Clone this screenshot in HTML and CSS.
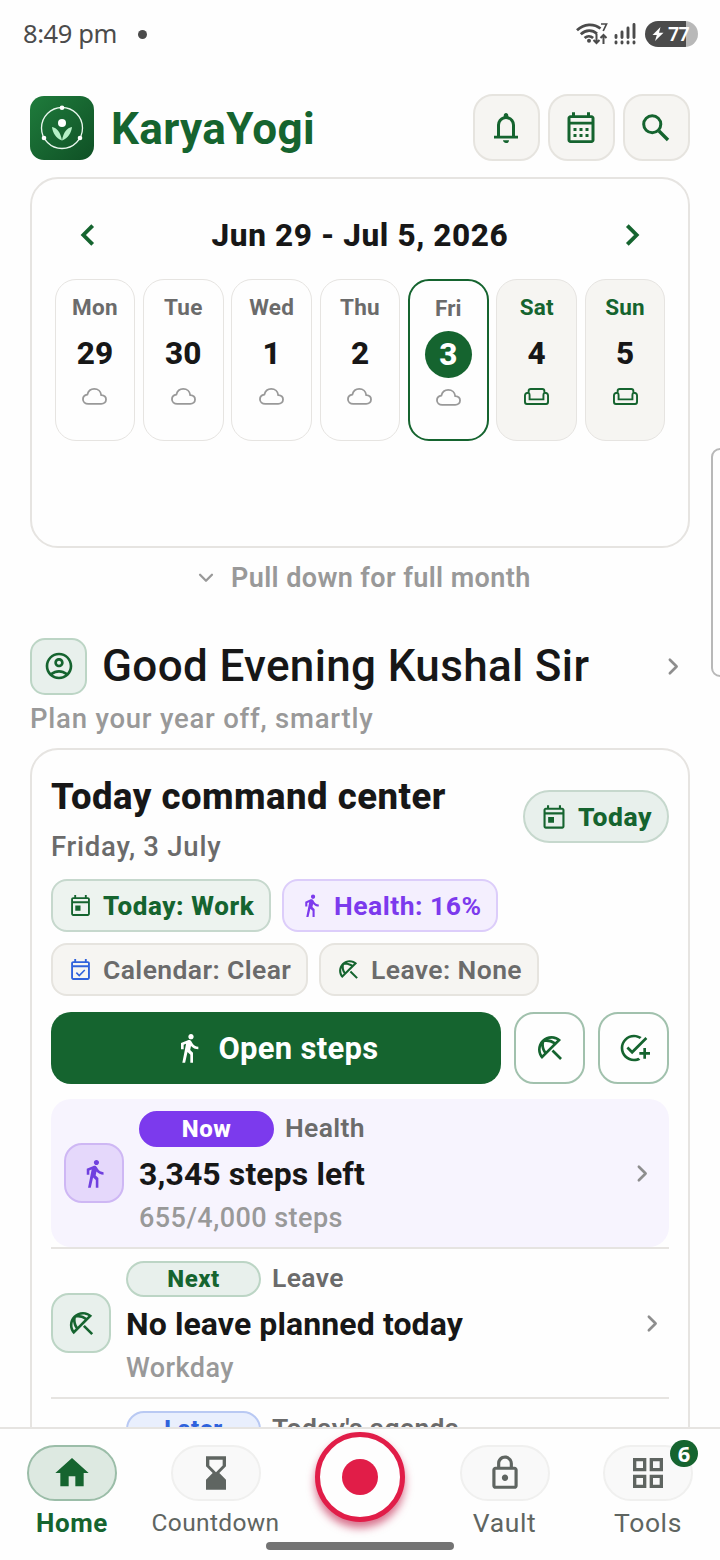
FILE: index.html
```html
<!DOCTYPE html>
<html lang="en">
<head>
<meta charset="utf-8">
<title>KaryaYogi</title>
<link rel="stylesheet" href="styles.css">
</head>
<body>
<svg class="defs" width="0" height="0" aria-hidden="true">
  <symbol id="today" viewBox="0 0 24 24"><path d="M19 4h-1V2h-1.800v2H7.800V2H6v2H5c-1.110 0-1.990.9-1.990 2L3 20c0 1.100.89 2 2 2h14c1.100 0 2-.9 2-2V6c0-1.100-.9-2-2-2zm.2 16.200H4.800V9.800h14.400v10.400zm0-12.200H4.800V5.800h14.400v2.200zM7 12h5v5H7z"/></symbol>
  <symbol id="event-ok" viewBox="0 0 24 24"><path d="M19 4h-1V2h-1.800v2H7.800V2H6v2H5c-1.110 0-1.990.9-1.990 2L3 20c0 1.100.89 2 2 2h14c1.100 0 2-.9 2-2V6c0-1.100-.9-2-2-2zm.2 16.200H4.800V9.800h14.400v10.400zm0-12.200H4.800V5.800h14.400v2.200z"/><path d="M8 15l2.800 2.800 5.300-5.300" fill="none" stroke="currentColor" stroke-width="1.500"/></symbol>
  <symbol id="walk" viewBox="0 0 24 24"><path d="M13.500 5.500c1.100 0 2-.9 2-2s-.9-2-2-2-2 .9-2 2 .9 2 2 2zM9.800 8.900L7 23h2.100l1.800-8 2.100 2v6h2v-7.500l-2.100-2 .6-3C14.800 12 16.800 13 19 13v-2c-1.900 0-3.500-1-4.300-2.400l-1-1.600c-.4-.6-1-1-1.700-1-.3 0-.5.1-.8.1L6 8.300V13h2V9.600l1.800-.7"/></symbol>
  <symbol id="beach" viewBox="0 0 24 24"><path d="M21 19.570l-1.427 1.428-6.442-6.442 1.430-1.428zM13.120 3c-2.580 0-5.160.98-7.140 2.950l-.01.01c-3.950 3.950-3.950 10.360 0 14.310l14.300-14.310C18.300 3.990 15.710 3 13.120 3zM6.140 17.270C5.400 16.030 5 14.610 5 13.120c0-.93.16-1.820.46-2.670.19 1.910.89 3.790 2.070 5.440l-1.390 1.380zm2.840-2.840C7.630 12.380 7.120 9.930 7.600 7.600c.58-.12 1.160-.18 1.750-.18 1.800 0 3.550.55 5.080 1.560l-5.450 5.450zm6.900-6.900c-1.650-1.180-3.530-1.880-5.430-2.060.85-.31 1.750-.47 2.680-.47 1.490 0 2.910.4 4.150 1.140l-1.400 1.390z"/></symbol>
  <symbol id="chev" viewBox="0 0 24 24"><path d="M8.500 5.500L15 12l-6.500 6.500" fill="none" stroke="currentColor" stroke-width="2.500" stroke-linejoin="round" stroke-linecap="round"/></symbol>
  <symbol id="chev-bold" viewBox="0 0 24 24"><path d="M8 4l8 8-8 8" fill="none" stroke="currentColor" stroke-width="3.300"/></symbol>
  <symbol id="cloud" viewBox="0 0 26 18"><path d="M6.500 16.500C3.300 16.500 1 14.300 1 11.600 1 9 3 7.100 5.600 6.800 6.500 3.300 9.300 1 12.700 1c4 0 6.900 2.700 7.300 6.500 2.900.1 5 1.900 5 4.500s-2.100 4.500-5 4.500z" fill="none" stroke="currentColor" stroke-width="1.900"/></symbol>
  <symbol id="sofa" viewBox="0 0 26 18"><path d="M4.800 5V3.200Q4.800 1 7 1h12q2.200 0 2.200 2.200V5M4.800 5q1 .6 1 2.200v4.600h14.400V7.200q0-1.600 1-2.200c2.100-.2 3.800.9 3.800 2.800v6.400q0 2.500-2.300 2.500H3.300Q1 16.700 1 14.200V7.800C1 5.900 2.700 4.800 4.800 5z" fill="none" stroke="currentColor" stroke-width="2"/></symbol>
</svg>
<div class="phone">
  <header class="status">
    <span class="clock">8:49 pm</span><span class="dot"></span>
    <svg class="wifi" viewBox="0 0 32 24"><g fill="none" stroke="currentColor" stroke-width="2.700"><path d="M1 8.200C8 1.300 18 1.300 24.500 6.500M4.800 12.300c5-4.800 11.500-4.800 16.200-.6M8.600 16c2.500-2.300 6-2.300 8.500 0"/><path d="M20.500 12v9m-3-3l3 3 3-3M27.500 22v-9m-3 3l3-3 3 3" stroke-width="2"/><path d="M25 2h5.500l-3.300 7" stroke-width="1.700"/></g><circle cx="13" cy="18.800" r="2"/></svg>
    <svg class="signal" viewBox="0 0 22 24"><g stroke="currentColor" stroke-width="2.900" stroke-linecap="round"><path d="M2 13.500v2M8 10v5.500M14 6v9.500M20 2.500v13M2 20v1M8 20v1M14 20v1M20 20v1"/></g></svg>
    <span class="battery"><svg viewBox="0 0 12 16"><path d="M8.500 1L.5 9h4.300L3 15l8.500-8.200H7z"/></svg>77</span>
  </header>

  <div class="topbar">
    <svg class="logo" viewBox="0 0 64 64"><defs><linearGradient id="lg" x1="0" y1="0" x2="1" y2="1"><stop offset="0" stop-color="#1f7c3c"/><stop offset="1" stop-color="#0f5025"/></linearGradient></defs><rect width="64" height="64" rx="14" fill="url(#lg)"/><circle cx="32" cy="32" r="20.500" fill="none" stroke="#e9f7ee" stroke-width="1.300"/><g fill="#fff"><circle cx="32" cy="11.700" r="2.300"/><circle cx="14" cy="42" r="2.300"/><circle cx="50" cy="42" r="2.300"/><circle cx="32" cy="27" r="4"/></g><path d="M32 44.500C30.500 36 27 32 22 31c.8 6 3.700 11 10 13.500zM32 44.500C33.500 36 37 32 42 31c-.8 6-3.700 11-10 13.500z" fill="#b5f0c6"/></svg>
    <h1 class="brand">KaryaYogi</h1>
    <div class="actions">
      <button class="tool"><svg viewBox="0 0 24 24"><path d="M4 19v-1.800h2V10q0-2.075 1.250-3.688T10.500 4.200v-.7q0-.625.438-1.062T12 2t1.063.438T13.500 3.500v.7q2 .5 3.250 2.113T18 10v7.200h2V19zm8 3q-.825 0-1.412-.587T10 20.200h4q0 .825-.587 1.413T12 22m-4-4.800h8V10q0-1.650-1.175-2.825T12 6 9.175 7.175 8 10z"/></svg></button>
      <button class="tool"><svg viewBox="0 0 24 24"><path d="M19 3.500h-1V1.500h-2v2H8v-2H6v2H5c-1.110 0-1.990.9-1.990 2L3 20c0 1.100.89 2 2 2h14c1.100 0 2-.9 2-2V5.500c0-1.100-.9-2-2-2zm0 16.700H5V9.600h14v10.600zm0-12.300H5V5.400h14v2.500zM9 14H7v-2h2v2zm4 0h-2v-2h2v2zm4 0h-2v-2h2v2zm-8 4H7v-2h2v2zm4 0h-2v-2h2v2zm4 0h-2v-2h2v2z"/></svg></button>
      <button class="tool"><svg viewBox="0 0 24 24"><g fill="none" stroke="currentColor" stroke-width="2"><circle cx="9.500" cy="9.500" r="5.700"/><path d="M14 14l6 6" stroke-width="2.200"/></g></svg></button>
    </div>
  </div>

  <section class="week card">
    <div class="weekhead"><svg class="arrow flip"><use href="#chev-bold"/></svg><h2>Jun 29 - Jul 5, 2026</h2><svg class="arrow"><use href="#chev-bold"/></svg></div>
    <div class="days">
      <div class="day"><span>Mon</span><b>29</b><svg><use href="#cloud"/></svg></div>
      <div class="day"><span>Tue</span><b>30</b><svg><use href="#cloud"/></svg></div>
      <div class="day"><span>Wed</span><b>1</b><svg><use href="#cloud"/></svg></div>
      <div class="day"><span>Thu</span><b>2</b><svg><use href="#cloud"/></svg></div>
      <div class="day current"><span>Fri</span><b>3</b><svg><use href="#cloud"/></svg></div>
      <div class="day weekend"><span>Sat</span><b>4</b><svg><use href="#sofa"/></svg></div>
      <div class="day weekend"><span>Sun</span><b>5</b><svg><use href="#sofa"/></svg></div>
    </div>
  </section>
  <p class="pull"><svg><use href="#chev"/></svg><span>Pull down for full month</span></p>

  <div class="greeting">
    <span class="avatar"><svg viewBox="0 0 24 24"><path d="M12 2C6.480 2 2 6.480 2 12s4.480 10 10 10 10-4.480 10-10S17.520 2 12 2zM7.350 18.500C8.660 17.560 10.260 17 12 17s3.340.56 4.650 1.500c-1.310.94-2.910 1.500-4.650 1.500s-3.340-.56-4.650-1.500zm10.790-1.380C16.450 15.800 14.320 15 12 15s-4.450.8-6.140 2.120C4.700 15.730 4 13.950 4 12c0-4.420 3.580-8 8-8s8 3.580 8 8c0 1.950-.7 3.730-1.860 5.120zM12 6c-1.930 0-3.500 1.570-3.500 3.500S10.070 13 12 13s3.500-1.570 3.500-3.500S13.930 6 12 6zm0 5c-.83 0-1.500-.67-1.500-1.500S11.170 8 12 8s1.500.67 1.500 1.500S12.830 11 12 11z"/></svg></span>
    <h2>Good Evening Kushal Sir</h2>
    <svg class="more"><use href="#chev"/></svg>
  </div>
  <p class="tagline">Plan your year off, smartly</p>

  <section class="center card">
    <div class="centerhead">
      <div><h2>Today command center</h2><p>Friday, 3 July</p></div>
      <span class="todaypill"><svg><use href="#today"/></svg><span>Today</span></span>
    </div>
    <div class="chips">
      <span class="chip green"><svg><use href="#today"/></svg><span>Today: Work</span></span>
      <span class="chip purple"><svg><use href="#walk"/></svg><span>Health: 16%</span></span>
    </div>
    <div class="chips">
      <span class="chip cal"><svg><use href="#event-ok"/></svg><span>Calendar: Clear</span></span>
      <span class="chip leave"><svg><use href="#beach"/></svg><span>Leave: None</span></span>
    </div>
    <div class="cta">
      <button class="primary"><svg><use href="#walk"/></svg><span>Open steps</span></button>
      <button class="outline"><svg><use href="#beach"/></svg></button>
      <button class="outline"><svg viewBox="0 0 24 24"><path d="M22 5.180L10.590 16.600l-4.240-4.240 1.410-1.410 2.830 2.830 10-10L22 5.180zM12 20c-4.410 0-8-3.590-8-8s3.590-8 8-8c1.570 0 3.040.46 4.280 1.250l1.450-1.450C16.100 2.670 14.130 2 12 2 6.480 2 2 6.480 2 12s4.480 10 10 10c1.730 0 3.360-.44 4.780-1.220l-1.500-1.500c-1 .46-2.110.72-3.280.72zm7-5h-3v2h3v3h2v-3h3v-2h-3v-3h-2v3z"/></svg></button>
    </div>
    <div class="item now">
      <span class="thumb"><svg><use href="#walk"/></svg></span>
      <div class="info"><div class="meta"><span class="tag">Now</span><span class="kind">Health</span></div><h3>3,345 steps left</h3><p>655/4,000 steps</p></div>
      <svg class="more"><use href="#chev"/></svg>
    </div>
    <div class="item next">
      <span class="thumb"><svg><use href="#beach"/></svg></span>
      <div class="info"><div class="meta"><span class="tag">Next</span><span class="kind">Leave</span></div><h3>No leave planned today</h3><p>Workday</p></div>
      <svg class="more"><use href="#chev"/></svg>
    </div>
    <div class="item later">
      <span class="thumb"></span>
      <div class="info"><div class="meta"><span class="tag">Later</span><span class="kind">Today's agenda</span></div></div>
    </div>
  </section>

  <div class="edge"></div>

  <nav class="nav">
    <a class="tab active"><span class="pill"><svg viewBox="0 0 24 24"><path d="M10 20v-6h4v6h5v-8h3L12 3 2 12h3v8z"/></svg></span><span>Home</span></a>
    <a class="tab countdown"><span class="pill"><svg viewBox="0 0 24 24"><path d="M18 22l-.01-6L14 12l3.990-4.010L18 2H6v6l4 4-4 3.990V22h12zM8 7.500V4h8v3.500l-4 4-4-4z"/></svg></span><span>Countdown</span></a>
    <a class="record"><i></i></a>
    <a class="tab vault"><span class="pill"><svg viewBox="0 0 24 24"><path d="M18 8h-1V6c0-2.760-2.240-5-5-5S7 3.240 7 6v2H6c-1.100 0-2 .9-2 2v10c0 1.100.9 2 2 2h12c1.100 0 2-.9 2-2V10c0-1.100-.9-2-2-2zM9 6c0-1.660 1.340-3 3-3s3 1.340 3 3v2H9V6zm9 14H6V10h12v10zm-6-3c1.100 0 2-.9 2-2s-.9-2-2-2-2 .9-2 2 .9 2 2 2z"/></svg></span><span>Vault</span></a>
    <a class="tab tools"><span class="pill"><svg viewBox="0 0 24 24"><path d="M3 3v8h8V3H3zm6 6H5V5h4v4zm-6 4v8h8v-8H3zm6 6H5v-4h4v4zm4-16v8h8V3h-8zm6 6h-4V5h4v4zm-6 4v8h8v-8h-8zm6 6h-4v-4h4v4z"/></svg><em class="badge">6</em></span><span>Tools</span></a>
    <div class="gesture"></div>
  </nav>
</div>
</body>
</html>
```
FILE: styles.css
```css
* { box-sizing: border-box; }
body, h1, h2, h3, p { margin: 0; }
button { padding: 0; font: inherit; }
svg { display: block; flex: none; fill: currentColor; }
.defs { position: absolute; }
.phone { position: relative; width: 720px; height: 1560px; overflow: hidden; background: #fefefe; color: #171717; font-family: Roboto, "Noto Sans", sans-serif; white-space: nowrap; }
.status { display: flex; align-items: center; height: 68px; padding: 0 22px 0 23px; color: #4b4b4b; }
.clock { font: 400 25.500px/34px "Noto Sans", sans-serif; letter-spacing: -.4px; margin-top: -2px; }
.dot { width: 9px; height: 9px; border-radius: 50%; background: #4b4b4b; margin-left: 21px; }
.wifi { width: 32px; height: 24px; margin-left: auto; }
.signal { width: 22px; height: 24px; margin: 0 9px 0 6px; }
.battery { width: 53px; height: 26px; border-radius: 13px; background: linear-gradient(90deg, #4b4b4b 41px, #b8b8b8 41px); color: #fff; font: 600 19.500px/26px "Noto Sans", sans-serif; letter-spacing: -.6px; display: flex; align-items: center; gap: 4px; padding-left: 7px; }
.battery svg { width: 12px; height: 16px; }

.topbar { display: flex; align-items: center; height: 68px; margin: 26px 30px 0; color: #15642f; }
.logo { width: 64px; height: 64px; }
.brand { margin: 2px 0 0 17px; font-size: 44px; line-height: 56px; font-weight: 700; letter-spacing: .35px; }
.actions { display: flex; gap: 8px; margin-left: auto; margin-bottom: 1px; }
.tool { width: 67px; height: 67px; border: 2px solid #e6e4df; border-radius: 20px; background: #f6f5f2; color: #15642f; display: grid; place-items: center; }
.tool svg { width: 36px; height: 36px; margin-right: 1px; }

.card { border: 2px solid #e6e4e1; border-radius: 28px; margin: 0 30px; background: #fefefe; }
.week { height: 371px; margin-top: 15px; padding: 34px 22.500px 0; }
.weekhead { display: flex; align-items: center; justify-content: space-between; height: 44px; padding: 0 19.500px; }
.weekhead h2 { font-size: 31.500px; font-weight: 800; letter-spacing: .6px; }
.arrow { width: 28px; height: 28px; color: #15642f; }
.flip { transform: scaleX(-1); }
.days { display: grid; grid-template-columns: repeat(7, 1fr); gap: 7.500px; margin-top: 22px; }
.day { height: 162px; border: 1.500px solid #e6e4e1; border-radius: 21px; display: flex; flex-direction: column; align-items: center; padding-top: 13px; color: #6b6b6b; }
.day span { font-size: 22.500px; line-height: 28px; font-weight: 700; letter-spacing: .2px; }
.day b { width: 47px; height: 47px; border-radius: 50%; margin: 9px 0 11px; text-align: center; font-size: 31.500px; line-height: 48px; font-weight: 800; color: #171717; }
.day svg { width: 25px; height: 17.300px; color: #999; }
.current { border: 2.500px solid #15642f; }
.current b { background: #15642f; color: #fff; }
.weekend { background: #f6f5f2; color: #15642f; }
.day.weekend svg { color: #15642f; }
.pull { display: flex; align-items: center; height: 36px; margin-top: 12px; padding-left: 195px; color: #999; font-size: 27px; font-weight: 600; letter-spacing: .4px; gap: 14px; }
.pull svg { width: 22px; height: 22px; transform: rotate(90deg); }

.greeting { display: flex; align-items: center; height: 56px; margin: 42px 30px 0; }
.avatar { width: 57px; height: 57px; border: 2px solid #bcd5c5; border-radius: 15px; background: #e8f0ec; color: #15642f; display: grid; place-items: center; }
.avatar svg { width: 32px; height: 32px; }
.greeting h2 { margin-left: 15px; font-size: 44px; font-weight: 500; letter-spacing: .35px; }
.more { width: 25px; height: 25px; margin-left: auto; color: #8e8e8e; }
.greeting .more { margin-right: 4px; }
.tagline { margin: 8px 30px 0; height: 33px; line-height: 34px; font-size: 27.500px; font-weight: 500; letter-spacing: .77px; color: #999; }

.center { margin-top: 13px; padding: 20px 19px 0; height: 720px; }
.centerhead { display: flex; justify-content: space-between; height: 109px; }
.centerhead h2 { font-size: 36.500px; line-height: 53px; font-weight: 800; letter-spacing: .5px; }
.centerhead p { font-size: 27.500px; line-height: 36px; margin-top: 6px; font-weight: 500; letter-spacing: .75px; color: #6b6b6b; }
.todaypill { margin-top: 20px; width: 146px; height: 53px; border: 2px solid #c6d8cd; border-radius: 27px; background: #e8f0ec; color: #15642f; display: flex; align-items: center; padding-left: 15px; gap: 10px; font-size: 26.500px; font-weight: 800; letter-spacing: .5px; }
.todaypill svg { width: 28px; height: 28px; }
.chips { display: flex; gap: 11px; margin-bottom: 11px; }
.chip { height: 53px; border: 2px solid #e6e4df; border-radius: 16px; background: #f6f5f2; color: #6b6b6b; display: flex; align-items: center; padding-left: 15px; gap: 10px; font-size: 26.500px; font-weight: 600; letter-spacing: .4px; }
.chip svg { width: 25px; height: 25px; }
.green { width: 220px; background: #edf3ef; border-color: #c6d8cd; color: #15642f; font-weight: 800; font-size: 26px; letter-spacing: .6px; }
.purple { width: 216px; background: #f4effe; border-color: #dccdfa; color: #7c3aed; font-weight: 700; letter-spacing: .5px; }
.cal { width: 257px; }
.cal svg { color: #2f62dc; }
.leave { width: 220px; }
.leave svg { color: #15642f; }
.cta { display: flex; gap: 13px; margin-top: 16px; }
.primary { width: 450px; height: 72px; border: 0; border-radius: 20px; background: #15642f; color: #fff; display: flex; align-items: center; justify-content: center; gap: 13px; font-size: 31px; font-weight: 700; letter-spacing: .3px; }
.primary svg { width: 32px; height: 32px; }
.outline { width: 71px; height: 72px; border: 2px solid #a1c1ad; border-radius: 20px; background: #fefefe; color: #15642f; display: grid; place-items: center; }
.outline svg { width: 32px; height: 32px; }
.item { display: flex; align-items: center; height: 150px; border-bottom: 2px solid #e6e4e1; }
.thumb { width: 60px; height: 60px; border: 2px solid #bcd5c5; border-radius: 18px; background: #e8f0ec; color: #15642f; display: grid; place-items: center; }
.thumb svg { width: 31px; height: 31px; }
.info { align-self: flex-start; margin-left: 15px; padding-top: 12px; }
.meta { display: flex; align-items: center; gap: 11px; height: 36px; }
.tag { width: 135px; height: 36px; border: 2px solid #bcd5c5; border-radius: 18px; background: #e8f0ec; color: #15642f; font-size: 24px; line-height: 33px; font-weight: 800; text-align: center; letter-spacing: .5px; }
.kind { font-size: 26.500px; line-height: 34px; margin-bottom: 2px; font-weight: 600; color: #6b6b6b; letter-spacing: .35px; }
.info h3 { font-size: 32px; line-height: 44px; margin-top: 5px; font-weight: 700; letter-spacing: .1px; }
.info p { font-size: 27px; line-height: 36px; margin-top: 4px; font-weight: 500; letter-spacing: .45px; color: #999; }
.item .more { margin-right: 4px; }
.now { position: relative; isolation: isolate; margin-top: 15px; padding: 0 1px 0 13px; }
.now::before { content: ""; position: absolute; inset: 0; z-index: -1; border-radius: 20px; background: #f7f4fe; }
.now .thumb { background: #e5d8fb; border-color: #ceb7f4; color: #7040df; }
.now .tag { background: #7c3aed; border-color: #7c3aed; color: #fff; }
.now .more { margin-right: 13px; }
.later { align-items: flex-start; border: 0; }
.later .thumb { visibility: hidden; }
.later .tag { color: #2f62dc; background: #e9effd; border-color: #b9c9f3; }

.edge { position: absolute; left: 711px; top: 448px; width: 20px; height: 229px; border: 2px solid #b8b8b8; border-radius: 9px; background: #fefefe; }
.nav { position: absolute; left: 0; top: 1427px; width: 720px; height: 133px; border-top: 2px solid #e6e4e1; background: #fefefe; display: grid; grid-template-columns: repeat(5, 144px); align-content: start; }
.tab { display: flex; flex-direction: column; align-items: center; padding-top: 16px; color: #5f6561; font-size: 26.500px; line-height: 36px; letter-spacing: .6px; }
.pill { position: relative; width: 90px; height: 56px; border: 2px solid #f0f0ef; border-radius: 28px; background: #f9f9f9; display: grid; place-items: center; margin-bottom: 4px; }
.pill svg { width: 40px; height: 40px; }
.active { color: #15642f; font-weight: 700; font-size: 26px; }
.active .pill { background: #dde9e1; border-color: #9bbda8; }
.countdown { font-size: 24.500px; letter-spacing: .35px; padding-right: 1px; }
.vault { padding-left: 1px; }
.vault .pill svg { width: 38px; height: 38px; }
.badge { position: absolute; right: -7px; top: -7px; width: 28px; height: 27px; border-radius: 14px; background: #15642f; color: #fff; font: 700 22px/27px "Noto Sans", sans-serif; letter-spacing: 0; text-align: center; }
.record { width: 90px; height: 90px; margin: 3px auto 0; border: 5px solid #e11d48; border-radius: 50%; background: #fefefe; box-shadow: 0 6px 9px rgba(190, 20, 65, .6); display: grid; place-items: center; }
.record i { width: 36px; height: 36px; border-radius: 50%; background: #e11d48; }
.gesture { position: absolute; left: 266px; top: 113px; width: 188px; height: 8px; border-radius: 4px; background: #737373; }
```
